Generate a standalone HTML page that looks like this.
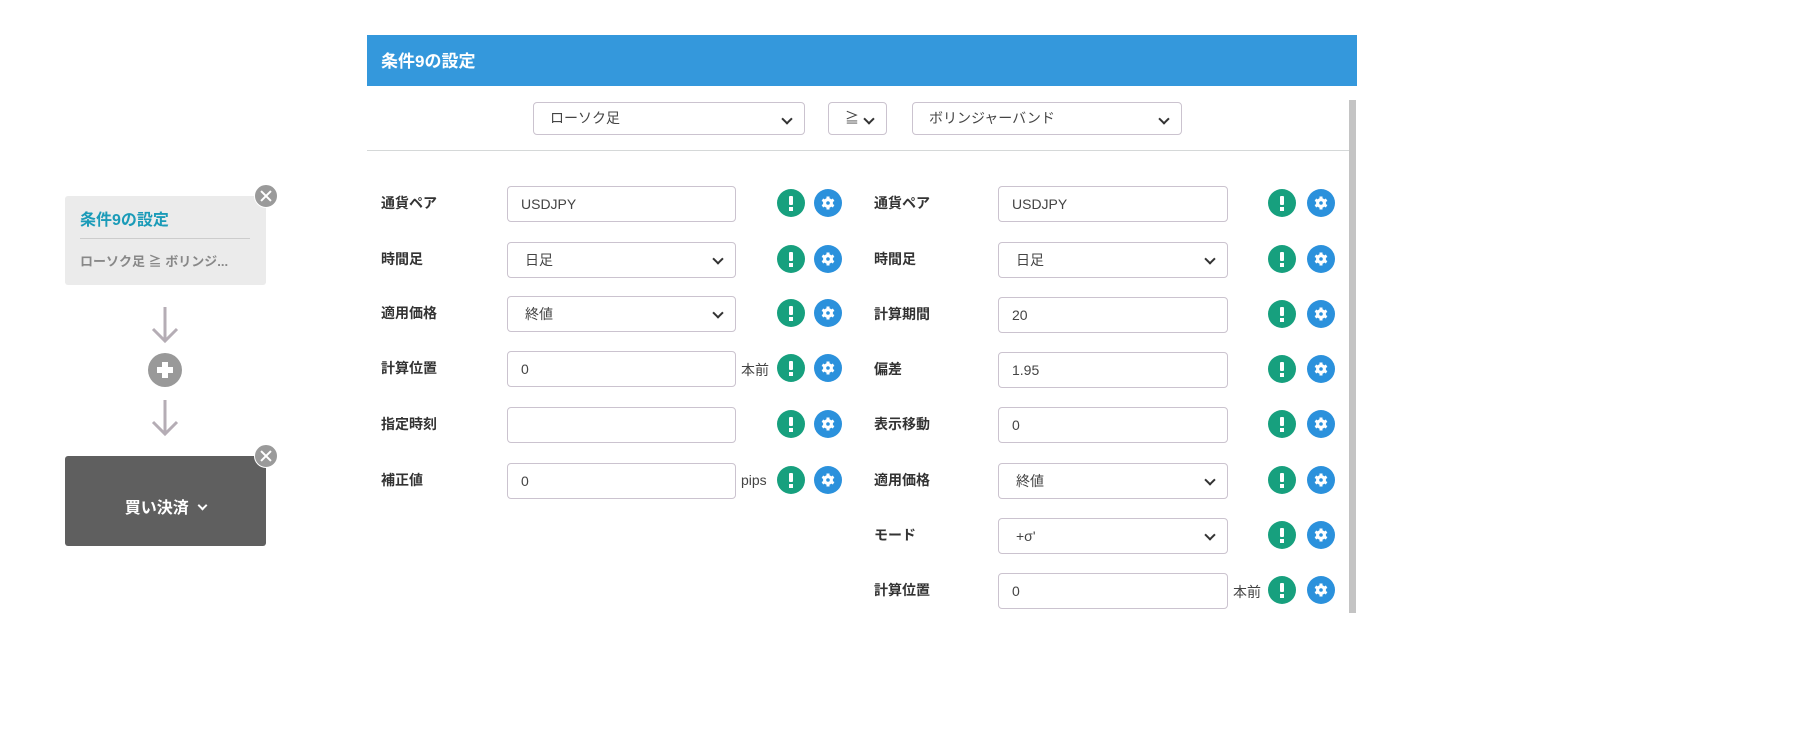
<!DOCTYPE html>
<html><head><meta charset="utf-8"><style>
*{box-sizing:border-box;margin:0;padding:0}
body{width:1807px;height:741px;background:#fff;position:relative;overflow:hidden;font-family:"Liberation Sans","Noto Sans CJK JP",sans-serif;color:#333}
.a{position:absolute}
.inp{position:absolute;height:36px;border:1px solid #cbc3cf;border-radius:4px;background:#fff;font-size:14px;color:#444;line-height:34px;padding-left:13px}
.sel::after{content:"";position:absolute;right:13px;top:12px;width:6px;height:6px;border-right:2.5px solid #333;border-bottom:2.5px solid #333;transform:rotate(45deg)}
.lbl{position:absolute;font-size:14px;font-weight:bold;color:#333;line-height:20px}
.ic{position:absolute;width:28px;height:28px}
.unit{position:absolute;font-size:14px;color:#444}
.x{position:absolute;width:24px;height:24px;border-radius:50%;background:#9a9a9a;border:1px solid #fff}
.x::before,.x::after{content:"";position:absolute;left:4px;top:10px;width:14px;height:2px;background:#fff;transform:rotate(45deg)}
.x::after{transform:rotate(-45deg)}
</style></head><body>
<svg width="0" height="0" style="position:absolute">
<defs>
<symbol id="g" viewBox="0 0 28 28"><circle cx="14" cy="14" r="14" fill="#17a07e"/><rect x="12" y="7" width="4" height="9" rx="1" fill="#fff"/><rect x="12" y="18" width="4" height="4" fill="#fff"/></symbol>
<symbol id="b" viewBox="0 0 28 28"><circle cx="14" cy="14" r="14" fill="#2b91dc"/><g fill="#fff"><circle cx="14" cy="14" r="5"/><rect x="12.5" y="7.5" width="3" height="13"/><rect x="12.5" y="7.5" width="3" height="13" transform="rotate(60 14 14)"/><rect x="12.5" y="7.5" width="3" height="13" transform="rotate(120 14 14)"/></g><circle cx="14" cy="14" r="1.8" fill="#2b91dc"/></symbol>
</defs></svg>

<div class="a" style="left:65px;top:196px;width:201px;height:89px;background:#ebebeb;border-radius:3px"></div>
<div class="a" style="left:80px;top:206px;font-size:16px;font-weight:bold;color:#1b9bb8">条件9の設定</div>
<div class="a" style="left:80px;top:238px;width:170px;height:1px;background:#ccc"></div>
<div class="a" style="left:80px;top:251px;font-size:13px;font-weight:bold;color:#888">ローソク足 ≧ ボリンジ...</div>
<div class="x" style="left:254px;top:184px"></div>

<svg class="a" style="left:145px;top:305px" width="40" height="40"><path d="M20 2V36M8 24L20 36L32 24" stroke="#b5adb5" stroke-width="3" fill="none"/></svg>
<div class="a" style="left:148px;top:353px;width:34px;height:34px;border-radius:50%;background:#999"></div>
<div class="a" style="left:157px;top:367px;width:16px;height:6px;background:#fff"></div>
<div class="a" style="left:162px;top:362px;width:6px;height:16px;background:#fff"></div>
<svg class="a" style="left:145px;top:398px" width="40" height="40"><path d="M20 2V36M8 24L20 36L32 24" stroke="#b5adb5" stroke-width="3" fill="none"/></svg>

<div class="a" style="left:65px;top:456px;width:201px;height:90px;background:#5f5f5f;border-radius:3px"></div>
<div class="a" style="left:65px;top:494px;width:201px;text-align:center;font-size:16px;font-weight:bold;color:#fff">買い決済 <span style="display:inline-block;width:7px;height:7px;border-right:2.5px solid #fff;border-bottom:2.5px solid #fff;transform:rotate(45deg);margin:0 0 4px 6px"></span></div>
<div class="x" style="left:254px;top:444px"></div>

<div class="a" style="left:367px;top:35px;width:990px;height:51px;background:#3498dc"></div>
<div class="a" style="left:381px;top:47px;font-size:17px;font-weight:bold;color:#fff">条件9の設定</div>
<div class="a" style="left:1349px;top:100px;width:7px;height:513px;background:#c4c4c4"></div>
<div class="a" style="left:367px;top:150px;width:982px;height:1px;background:#d5d8d8"></div>

<div class="inp sel" style="left:533px;top:102px;width:272px;height:33px;line-height:31px;padding-left:16px">ローソク足</div>
<div class="inp sel" style="left:828px;top:102px;width:59px;height:33px;line-height:31px;padding-left:16px">≧</div>
<div class="inp sel" style="left:912px;top:102px;width:270px;height:33px;line-height:31px;padding-left:16px">ボリンジャーバンド</div>

<div class="lbl" style="left:381px;top:193px">通貨ペア</div>
<div class="inp" style="left:507px;top:186px;width:229px">USDJPY</div>
<div class="lbl" style="left:381px;top:249px">時間足</div>
<div class="inp sel" style="left:507px;top:242px;width:229px;padding-left:17px">日足</div>
<div class="lbl" style="left:381px;top:303px">適用価格</div>
<div class="inp sel" style="left:507px;top:296px;width:229px;padding-left:17px">終値</div>
<div class="lbl" style="left:381px;top:358px">計算位置</div>
<div class="inp" style="left:507px;top:351px;width:229px">0</div>
<div class="unit" style="left:741px;top:360px">本前</div>
<div class="lbl" style="left:381px;top:414px">指定時刻</div>
<div class="inp" style="left:507px;top:407px;width:229px"></div>
<div class="lbl" style="left:381px;top:470px">補正値</div>
<div class="inp" style="left:507px;top:463px;width:229px">0</div>
<div class="unit" style="left:741px;top:472px">pips</div>

<div class="lbl" style="left:874px;top:193px">通貨ペア</div>
<div class="inp" style="left:998px;top:186px;width:230px">USDJPY</div>
<div class="lbl" style="left:874px;top:249px">時間足</div>
<div class="inp sel" style="left:998px;top:242px;width:230px;padding-left:17px">日足</div>
<div class="lbl" style="left:874px;top:304px">計算期間</div>
<div class="inp" style="left:998px;top:297px;width:230px">20</div>
<div class="lbl" style="left:874px;top:359px">偏差</div>
<div class="inp" style="left:998px;top:352px;width:230px">1.95</div>
<div class="lbl" style="left:874px;top:414px">表示移動</div>
<div class="inp" style="left:998px;top:407px;width:230px">0</div>
<div class="lbl" style="left:874px;top:470px">適用価格</div>
<div class="inp sel" style="left:998px;top:463px;width:230px;padding-left:17px">終値</div>
<div class="lbl" style="left:874px;top:525px">モード</div>
<div class="inp sel" style="left:998px;top:518px;width:230px;padding-left:17px">+σ'</div>
<div class="lbl" style="left:874px;top:580px">計算位置</div>
<div class="inp" style="left:998px;top:573px;width:230px">0</div>
<div class="unit" style="left:1233px;top:582px">本前</div>

<svg class="ic" style="left:777px;top:189px"><use href="#g"/></svg><svg class="ic" style="left:814px;top:189px"><use href="#b"/></svg>
<svg class="ic" style="left:777px;top:245px"><use href="#g"/></svg><svg class="ic" style="left:814px;top:245px"><use href="#b"/></svg>
<svg class="ic" style="left:777px;top:299px"><use href="#g"/></svg><svg class="ic" style="left:814px;top:299px"><use href="#b"/></svg>
<svg class="ic" style="left:777px;top:354px"><use href="#g"/></svg><svg class="ic" style="left:814px;top:354px"><use href="#b"/></svg>
<svg class="ic" style="left:777px;top:410px"><use href="#g"/></svg><svg class="ic" style="left:814px;top:410px"><use href="#b"/></svg>
<svg class="ic" style="left:777px;top:466px"><use href="#g"/></svg><svg class="ic" style="left:814px;top:466px"><use href="#b"/></svg>

<svg class="ic" style="left:1268px;top:189px"><use href="#g"/></svg><svg class="ic" style="left:1307px;top:189px"><use href="#b"/></svg>
<svg class="ic" style="left:1268px;top:245px"><use href="#g"/></svg><svg class="ic" style="left:1307px;top:245px"><use href="#b"/></svg>
<svg class="ic" style="left:1268px;top:300px"><use href="#g"/></svg><svg class="ic" style="left:1307px;top:300px"><use href="#b"/></svg>
<svg class="ic" style="left:1268px;top:355px"><use href="#g"/></svg><svg class="ic" style="left:1307px;top:355px"><use href="#b"/></svg>
<svg class="ic" style="left:1268px;top:410px"><use href="#g"/></svg><svg class="ic" style="left:1307px;top:410px"><use href="#b"/></svg>
<svg class="ic" style="left:1268px;top:466px"><use href="#g"/></svg><svg class="ic" style="left:1307px;top:466px"><use href="#b"/></svg>
<svg class="ic" style="left:1268px;top:521px"><use href="#g"/></svg><svg class="ic" style="left:1307px;top:521px"><use href="#b"/></svg>
<svg class="ic" style="left:1268px;top:576px"><use href="#g"/></svg><svg class="ic" style="left:1307px;top:576px"><use href="#b"/></svg>

</body></html>
